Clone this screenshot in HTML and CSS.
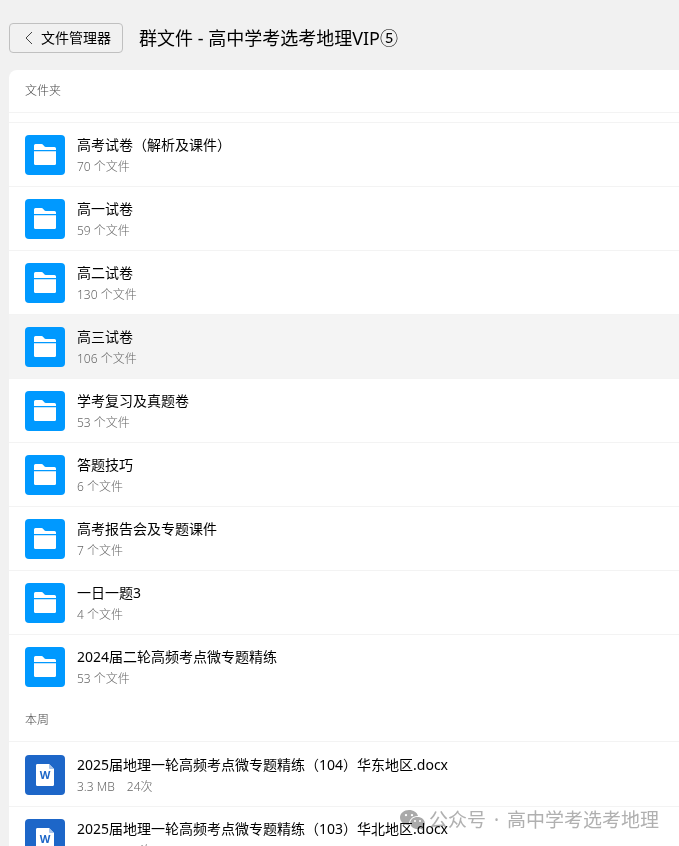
FILE: index.html
```html
<!DOCTYPE html>
<html lang="zh-CN">
<head>
    <meta charset="UTF-8">
    <meta name="viewport" content="width=device-width, initial-scale=1.0">
    <title>群文件</title>
    <link rel="stylesheet" href="styles.css">
</head>
<body>
    <!-- Iconos compartidos -->
    <svg class="sprite" aria-hidden="true">
        <symbol id="icon-folder" viewBox="0 0 40 40">
            <path fill="#fff" d="M9 15V10.500Q9 9 10.500 9H16.500Q17.500 9 18 9.700L19.300 11.300Q19.800 12 20.800 12H29.500Q31 12 31 13.500V15Z"/>
            <path fill="#fff" d="M9 16.300H31V28.500Q31 30 29.500 30H10.500Q9 30 9 28.500Z"/>
        </symbol>
        <symbol id="icon-word" viewBox="0 0 40 40">
            <path fill="#fff" d="M12 9H24L29 14V29.500Q29 31 27.500 31H12.500Q11 31 11 29.500V10.500Q11 9 12 9Z"/>
            <path fill="#a9c5ec" d="M24 9L29 14H25Q24 14 24 13Z"/>
            <text class="word-letter" x="20" y="24" text-anchor="middle">W</text>
        </symbol>
    </svg>

    <header class="header">
        <button type="button" class="back-btn">
            <svg class="back-icon" viewBox="0 0 8 14" aria-hidden="true"><path d="M7 1L1 7L7 13"/></svg>
            文件管理器
        </button>
        <h1 class="title">群文件 - 高中学考选考地理VIP⑤</h1>
    </header>

    <main class="panel">
        <h2 class="section-title">文件夹</h2>
        <ul class="list folder-list">
            <li class="item">
                <svg class="icon folder"><use href="#icon-folder"/></svg>
                <div class="info"><p class="name">高考试卷（解析及课件）</p><p class="meta">70 个文件</p></div>
            </li>
            <li class="item">
                <svg class="icon folder"><use href="#icon-folder"/></svg>
                <div class="info"><p class="name">高一试卷</p><p class="meta">59 个文件</p></div>
            </li>
            <li class="item">
                <svg class="icon folder"><use href="#icon-folder"/></svg>
                <div class="info"><p class="name">高二试卷</p><p class="meta">130 个文件</p></div>
            </li>
            <li class="item active">
                <svg class="icon folder"><use href="#icon-folder"/></svg>
                <div class="info"><p class="name">高三试卷</p><p class="meta">106 个文件</p></div>
            </li>
            <li class="item">
                <svg class="icon folder"><use href="#icon-folder"/></svg>
                <div class="info"><p class="name">学考复习及真题卷</p><p class="meta">53 个文件</p></div>
            </li>
            <li class="item">
                <svg class="icon folder"><use href="#icon-folder"/></svg>
                <div class="info"><p class="name">答题技巧</p><p class="meta">6 个文件</p></div>
            </li>
            <li class="item">
                <svg class="icon folder"><use href="#icon-folder"/></svg>
                <div class="info"><p class="name">高考报告会及专题课件</p><p class="meta">7 个文件</p></div>
            </li>
            <li class="item">
                <svg class="icon folder"><use href="#icon-folder"/></svg>
                <div class="info"><p class="name">一日一题3</p><p class="meta">4 个文件</p></div>
            </li>
            <li class="item">
                <svg class="icon folder"><use href="#icon-folder"/></svg>
                <div class="info"><p class="name">2024届二轮高频考点微专题精练</p><p class="meta">53 个文件</p></div>
            </li>
        </ul>

        <h2 class="section-title">本周</h2>
        <ul class="list file-list">
            <li class="item">
                <svg class="icon word"><use href="#icon-word"/></svg>
                <div class="info"><p class="name">2025届地理一轮高频考点微专题精练（104）华东地区.docx</p><p class="meta"><span>3.3 MB</span><span>24次</span></p></div>
            </li>
            <li class="item">
                <svg class="icon word"><use href="#icon-word"/></svg>
                <div class="info"><p class="name">2025届地理一轮高频考点微专题精练（103）华北地区.docx</p><p class="meta"><span>3.3 MB</span><span>24次</span></p></div>
            </li>
        </ul>
    </main>

    <div class="watermark">
        <svg class="wechat" viewBox="0 0 25 20" aria-hidden="true">
            <path fill="#a9a9a9" fill-rule="evenodd" d="M9 0C4 0 0 3.300 0 7.500C0 9.900 1.300 12 3.300 13.400L2.500 16L5.500 14.500Q7 15 9.200 15C8.500 10 12 6 18 6C17.200 2.500 13.500 0 9 0ZM6 3.900A1.200 1.200 0 1 1 6 6.300A1.200 1.200 0 1 1 6 3.900ZM12 3.900A1.200 1.200 0 1 1 12 6.300A1.200 1.200 0 1 1 12 3.900Z"/>
            <path fill="#a9a9a9" fill-rule="evenodd" d="M17.500 7C13.300 7 10.200 9.700 10.200 13C10.200 16.400 13.400 19 17.500 19Q19 19 20.300 18.600L22.800 19.900L22.200 17.600C23.900 16.500 24.800 14.900 24.800 13C24.800 9.700 21.600 7 17.500 7ZM15 10.100A1 1 0 1 1 15 12.100A1 1 0 1 1 15 10.100ZM20 10.100A1 1 0 1 1 20 12.100A1 1 0 1 1 20 10.100Z"/>
        </svg>
        <p class="account"><span>公众号</span><span>·</span><span>高中学考选考地理</span></p>
    </div>
</body>
</html>
```
FILE: styles.css
```css
* {
    box-sizing: border-box;
}

body {
    display: flex;
    flex-direction: column;
    height: 100vh;
    margin: 0;
    padding-left: 9px;
    overflow: hidden;
    position: relative;
    background: #f1f1f1;
    color: #000;
    font-family: "Noto Sans", "Noto Sans CJK SC", sans-serif;
}

h1, h2, p, ul {
    margin: 0;
    padding: 0;
    font-weight: normal;
}

.sprite {
    position: absolute;
    width: 0;
    height: 0;
}

.header {
    display: flex;
    flex-shrink: 0;
    align-items: center;
    gap: 16px;
    height: 70px;
    padding-top: 6px;
}

.back-btn {
    display: flex;
    align-items: center;
    gap: 8px;
    height: 30px;
    padding: 0 11px 0 15px;
    border: 1px solid #c0c0c0;
    border-radius: 4px;
    background: transparent;
    color: #000;
    font-family: inherit;
    font-size: 14px;
    line-height: 20px;
    cursor: pointer;
}

.back-icon {
    width: 8px;
    height: 14px;
    fill: none;
    stroke: #444;
}

.title {
    font-size: 18px;
    line-height: 24px;
}

.panel {
    flex: 1;
    min-height: 0;
    overflow: hidden;
    background: #fff;
    border-top-left-radius: 8px;
}

.section-title {
    height: 43px;
    padding-left: 16px;
    border-bottom: 1px solid #f3f3f3;
    color: #444;
    font-size: 12px;
    font-weight: 300;
    line-height: 42px;
}

.list {
    list-style: none;
}

.folder-list {
    padding: 9px 0 1px;
}

.item {
    display: flex;
    align-items: center;
    gap: 12px;
    height: 64px;
    padding: 0 16px;
    border-top: 1px solid #f3f3f3;
}

.file-list .item:first-child {
    border-top-color: #fff;
}

.item.active {
    background: #f4f4f4;
}

.icon {
    flex-shrink: 0;
    width: 40px;
    height: 40px;
    border-radius: 4px;
}

.folder {
    background: #0099ff;
}

.word {
    background: #1d66c8;
}

.word-letter {
    fill: #1d66c8;
    font-size: 11px;
    font-weight: bold;
}

.name {
    font-size: 14px;
    line-height: 22px;
    white-space: nowrap;
}

.meta {
    display: flex;
    gap: 12px;
    color: #666;
    font-size: 12px;
    font-weight: 300;
    line-height: 22px;
}

.info {
    padding-top: 2px;
}

.watermark {
    position: absolute;
    right: 20px;
    bottom: 12px;
    display: flex;
    align-items: center;
    gap: 4px;
    color: #b0b0b0;
    font-size: 19px;
    line-height: 28px;
    mix-blend-mode: multiply;
}

.account {
    display: flex;
    gap: 8px;
}

.wechat {
    width: 25px;
    height: 20px;
}
```
